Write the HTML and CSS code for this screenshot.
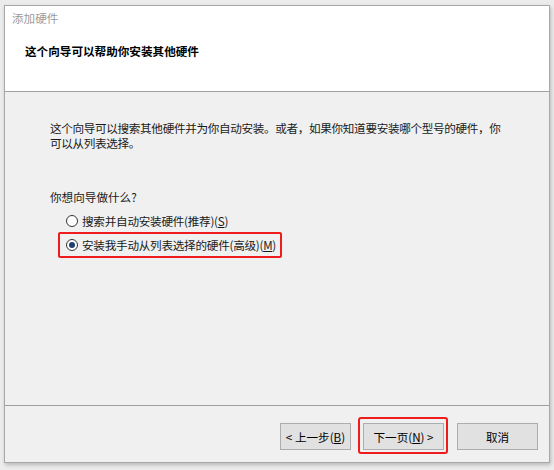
FILE: index.html
```html
<!DOCTYPE html>
<html lang="zh-CN">
<head>
<meta charset="utf-8">
<title>添加硬件</title>
<link rel="stylesheet" href="styles.css">
</head>
<body>
<div class="window">
  <header class="header">
    <div class="win-title">添加硬件</div>
    <div class="head-title">这个向导可以帮助你安装其他硬件</div>
  </header>
  <main class="content">
    <p class="intro">这个向导可以搜索其他硬件并为你自动安装。或者，如果你知道要安装哪个型号的硬件，你<br>可以从列表选择。</p>
    <p class="question">你想向导做什么?</p>
    <div class="options">
      <label class="option"><span class="radio"></span><span>搜索并自动安装硬件(推荐)(<u>S</u>)</span></label>
      <label class="option marked"><span class="radio checked"></span><span>安装我手动从列表选择的硬件(高级)(<u>M</u>)</span></label>
    </div>
  </main>
  <footer class="footer">
    <button class="btn btn-back">&lt; 上一步(<u>B</u>)</button>
    <button class="btn btn-next">下一页(<u>N</u>) &gt;<span class="mark"></span></button>
    <button class="btn btn-cancel">取消</button>
  </footer>
</div>
</body>
</html>
```

FILE: styles.css
```css
* { box-sizing: border-box; }
html, body { margin: 0; padding: 0; }
body {
  background: #ececec;
  width: 554px;
  height: 470px;
  overflow: hidden;
  font-family: "Noto Sans CJK SC", "Microsoft YaHei", sans-serif;
  font-size: 11.6px;
  color: #1a1a1a;
}
.window {
  margin: 5px 0 0 4px;
  width: 546px;
  height: 458px;
  border: 1px solid #a8a8a8;
  background: #f0f0f0;
  box-shadow: 1px 2px 4px rgba(0,0,0,0.22);
  display: flex;
  flex-direction: column;
}
.header {
  height: 86px;
  background: #ffffff;
  border-bottom: 1px solid #a0a0a0;
  padding: 5px 0 0 7px;
}
.win-title {
  color: #9a9a9a;
  line-height: 14px;
}
.head-title {
  margin: 19px 0 0 13px;
  font-weight: bold;
  line-height: 14px;
  color: #000;
}
.content {
  flex: 1;
  padding: 29px 0 0 45px;
}
.intro {
  margin: 0;
  line-height: 15px;
  letter-spacing: -0.33px;
}
.question {
  margin: 39px 0 0 0;
  line-height: 15px;
}
.options {
  margin: 3px 0 0 8px;
  display: flex;
  flex-direction: column;
  align-items: flex-start;
}
.option {
  display: flex;
  align-items: center;
  gap: 4px;
  height: 26px;
  padding: 0 4px 0 6px;
  border: 2px solid transparent;
  border-radius: 2px;
  white-space: nowrap;
  letter-spacing: -0.25px;
}
.option + .option { margin-top: -2px; }
.option.marked { border-color: #ee1c1c; }
.radio {
  width: 12px;
  height: 12px;
  border: 1px solid #333;
  border-radius: 50%;
  background: #fff;
  display: flex;
  align-items: center;
  justify-content: center;
  flex: none;
}
.radio.checked::after {
  content: "";
  width: 6px;
  height: 6px;
  border-radius: 50%;
  background: #1d3f6e;
}
.footer {
  height: 57px;
  border-top: 1px solid #a0a0a0;
  display: flex;
  justify-content: flex-end;
  align-items: flex-start;
  padding: 17px 11px 0 0;
}
.btn {
  position: relative;
  height: 27px;
  width: 81px;
  background: #e1e1e1;
  border: 1px solid #adadad;
  font-family: inherit;
  font-size: 11.6px;
  color: #000;
  padding: 0;
}
.btn-back { width: 71px; }
.btn-next { margin-left: 12px; }
.btn-cancel { margin-left: 13px; }
.mark {
  position: absolute;
  left: -6px;
  right: -5px;
  top: -7px;
  bottom: -5px;
  border: 2px solid #ee1c1c;
  border-radius: 3px;
}
```
